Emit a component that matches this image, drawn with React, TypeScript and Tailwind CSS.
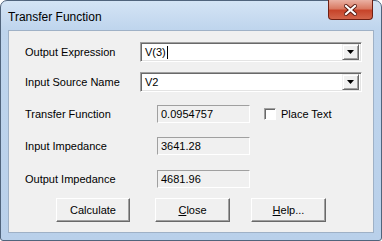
import React from "react";

const sunken = "border border-t-[#a0a0a0] border-l-[#a0a0a0] border-b-white border-r-white";

function ComboBox({ value, caret }: { value: string; caret?: boolean }) {
  return (
    <div
      className={`w-[222px] h-[20px] bg-white ${sunken} shadow-[inset_1px_1px_0_#696969,inset_-1px_-1px_0_#e3e3e3] flex items-center p-[2px]`}
    >
      <span className="flex-1 pl-[2px] text-[11px] leading-none text-black flex items-center">
        {value}
        {caret && <span className="inline-block w-[1px] h-[13px] bg-black ml-[1px]" />}
      </span>
      <div className="w-[17px] h-[16px] bg-[#f0f0f0] border border-t-[#f0f0f0] border-l-[#f0f0f0] border-b-[#696969] border-r-[#696969] shadow-[inset_1px_1px_0_#ffffff,inset_-1px_-1px_0_#a0a0a0] flex items-center justify-center">
        <svg width="7" height="4" viewBox="0 0 7 4">
          <path d="M0 0H7L3.5 4Z" fill="#000" />
        </svg>
      </div>
    </div>
  );
}

function ReadBox({ value }: { value: string }) {
  return (
    <div className={`w-[93px] h-[18px] bg-[#f0f0f0] ${sunken} flex items-center pl-[3px] text-[11px] text-black`}>
      {value}
    </div>
  );
}

function Button({ children, w }: { children: React.ReactNode; w: string }) {
  return (
    <div
      className={`${w} h-[24px] bg-[#f0f0f0] border border-t-white border-l-white border-b-[#696969] border-r-[#696969] shadow-[inset_-1px_-1px_0_#a0a0a0] flex items-center justify-center text-[11px] text-black`}
    >
      {children}
    </div>
  );
}

export default function App() {
  const label = "w-[115px] text-[11px] text-black";
  return (
    <div className="w-[382px] h-[241px] bg-white" style={{ fontFamily: '"Liberation Sans", Arial, sans-serif' }}>
      <div className="w-[382px] h-[241px] rounded-t-[7px] rounded-b-[3px] border border-[#50647c] bg-[linear-gradient(to_bottom,#d4e4f5,#bfd5ed_28px,#b9d0ea)] flex flex-col">
        {/* title bar */}
        <div className="h-[29px] flex justify-between pl-[7px] pr-[8px]">
          <span className="text-[12px] text-black mt-[7px]">Transfer Function</span>
          <div className="w-[45px] h-[20px] -mt-[1px] rounded-b-[4px] border border-t-0 border-[#701f12] bg-[linear-gradient(to_bottom,#eab1a3,#d97a63_45%,#c7442a_55%,#d2654b)] flex items-center justify-center">
            <svg width="13" height="12" viewBox="0 0 13 12">
              <path d="M2 2L11 10M11 2L2 10" stroke="#5a1a10" strokeWidth="4" strokeLinecap="square" />
              <path d="M2 2L11 10M11 2L2 10" stroke="#ffffff" strokeWidth="2.2" strokeLinecap="square" />
            </svg>
          </div>
        </div>

        {/* client area */}
        <div className="mx-[7px] h-[203px] bg-[#f0f0f0] border border-[#9fb1c6] flex flex-col pt-[11px] pl-[16px]">
          <div className="flex items-center h-[20px]">
            <span className={label}>Output Expression</span>
            <ComboBox value="V(3)" caret />
          </div>
          <div className="flex items-center h-[20px] mt-[10px]">
            <span className={label}>Input Source Name</span>
            <ComboBox value="V2" />
          </div>
          <div className="flex items-center h-[18px] mt-[13px]">
            <span className={label}>Transfer Function</span>
            <div className="ml-[17px]">
              <ReadBox value="0.0954757" />
            </div>
            <div className={`ml-[14px] w-[12px] h-[12px] bg-white ${sunken} shadow-[inset_1px_1px_0_#696969]`} />
            <span className="ml-[5px] text-[11px] text-black">Place Text</span>
          </div>
          <div className="flex items-center h-[18px] mt-[14px]">
            <span className={label}>Input Impedance</span>
            <div className="ml-[17px]">
              <ReadBox value="3641.28" />
            </div>
          </div>
          <div className="flex items-center h-[18px] mt-[15px]">
            <span className={label}>Output Impedance</span>
            <div className="ml-[17px]">
              <ReadBox value="4681.96" />
            </div>
          </div>
          <div className="flex mt-[10px] pl-[31px] gap-[25px]">
            <Button w="w-[74px]">Calculate</Button>
            <Button w="w-[75px]">
              <span>
                <span className="underline">C</span>lose
              </span>
            </Button>
            <div className="-ml-[4px]">
              <Button w="w-[75px]">
                <span>
                  <span className="underline">H</span>elp...
                </span>
              </Button>
            </div>
          </div>
        </div>
      </div>
    </div>
  );
}
